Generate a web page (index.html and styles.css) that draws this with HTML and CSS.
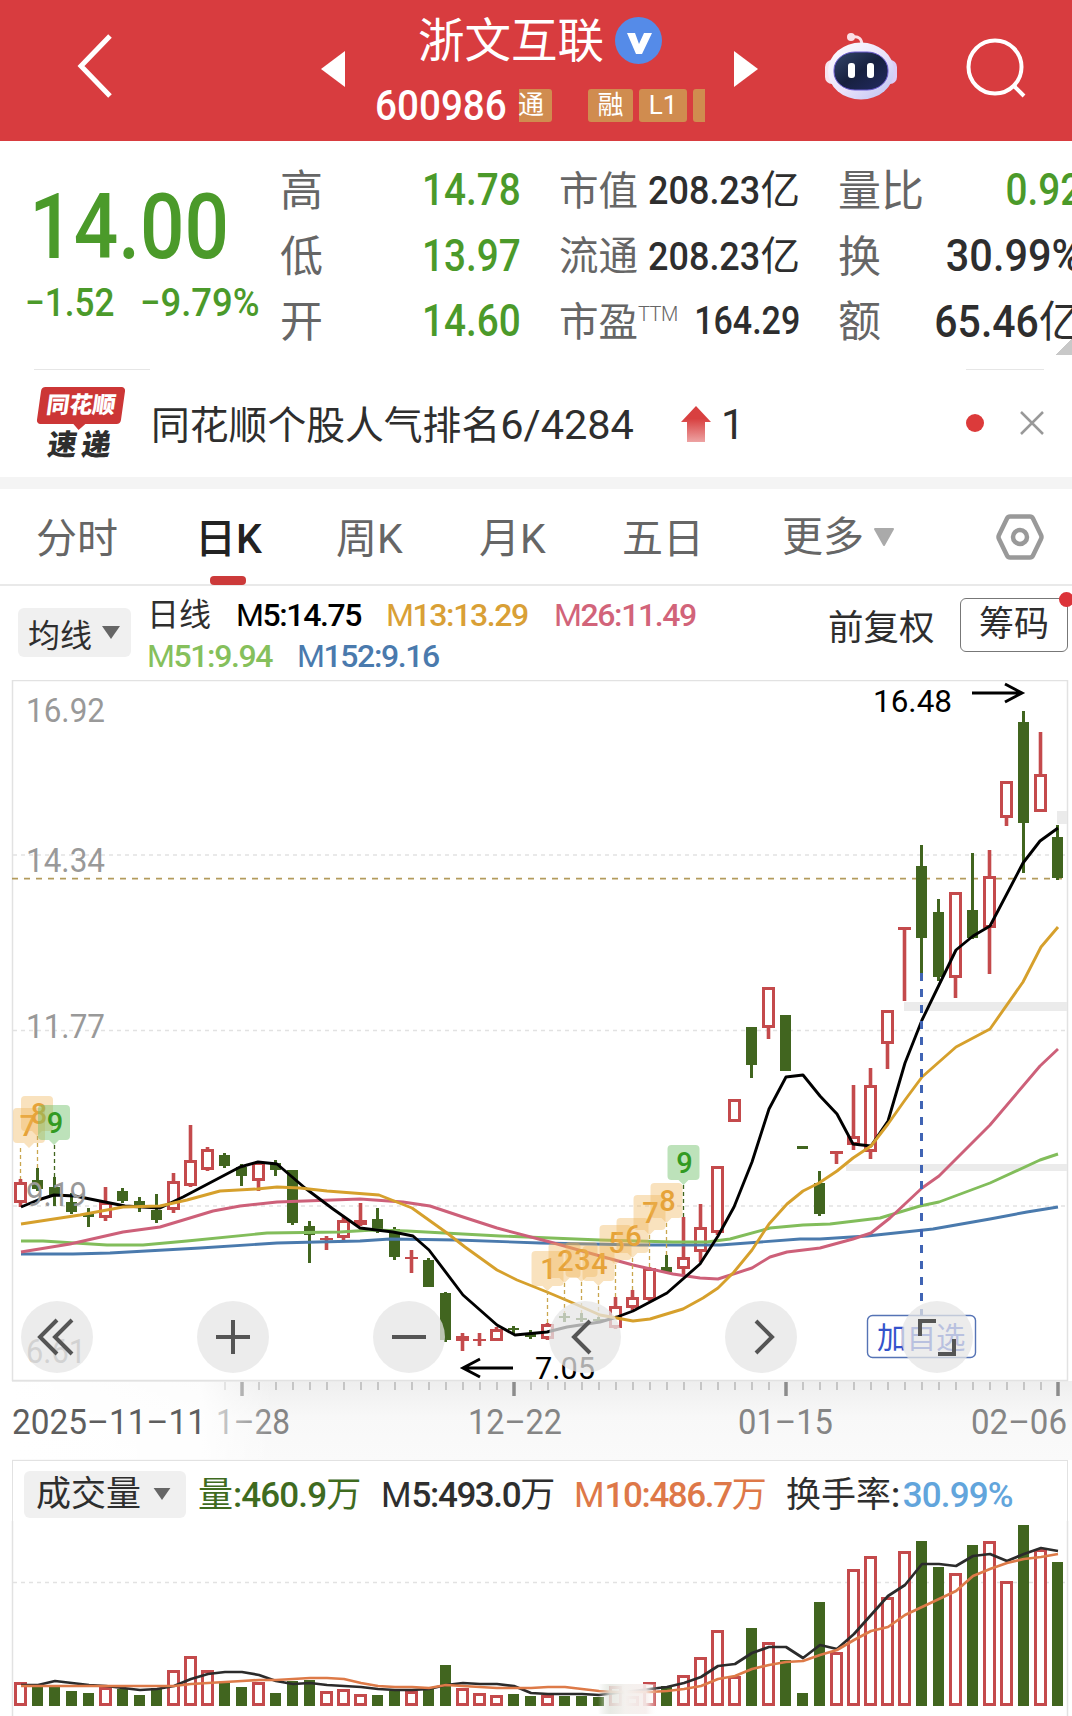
FILE: index.html
```html
<!DOCTYPE html>
<html lang="zh-CN">
<head>
    <meta charset="UTF-8">
    <meta name="viewport" content="width=device-width, initial-scale=1.0">
    <title>浙文互联 600986</title>
    <link rel="stylesheet" href="styles.css">
</head>
<body>
    <header class="header">
        <svg class="back" width="36" height="66" viewBox="0 0 36 66"><path d="M33 3 L4 33 L33 63"/></svg>
        <svg class="prev" width="24" height="36" viewBox="0 0 24 36"><path d="M24 0 V36 L0 18 Z"/></svg>
        <div class="stock">
            <div class="stock-name">浙文互联
                <svg width="47" height="47" viewBox="0 0 47 47"><circle cx="23.5" cy="23.5" r="23.5" fill="#558be8"/><path d="M12 16 h8 l4 11 5 -11 h8 l-10 21 h-6 z" fill="#fff"/></svg>
            </div>
            <div class="stock-code">
                <span class="code">600986</span>
                <span class="tag tag-first">通</span>
                <span class="tag tag-rong">融</span>
                <span class="tag">L1</span>
                <span class="tag tag-cut"></span>
            </div>
        </div>
        <svg class="next" width="24" height="36" viewBox="0 0 24 36"><path d="M0 0 V36 L24 18 Z"/></svg>
        <svg class="robot" width="72" height="68" viewBox="0 0 72 68">
            <defs>
                <linearGradient id="head" x1="0" y1="0" x2="1" y2="1"><stop offset="0" stop-color="#fff"/><stop offset=".55" stop-color="#e9e2fa"/><stop offset="1" stop-color="#b9c0f2"/></linearGradient>
                <linearGradient id="face" x1="0" y1="0" x2="1" y2="1"><stop offset="0" stop-color="#34466b"/><stop offset=".5" stop-color="#17203f"/><stop offset="1" stop-color="#222a62"/></linearGradient>
            </defs>
            <path d="M27 4 Q37 2 37 13" fill="none" stroke="#fbdfe6" stroke-width="3"/>
            <circle cx="26" cy="4" r="4" fill="#fbdfe6"/>
            <rect x="0" y="27" width="14" height="24" rx="7" fill="#f7e4ee"/>
            <rect x="58" y="27" width="14" height="24" rx="7" fill="#dccdf5"/>
            <ellipse cx="36" cy="38" rx="33" ry="28.500" fill="url(#head)"/>
            <rect x="9" y="19" width="54" height="38" rx="21" ry="18" fill="url(#face)" stroke="#6c5cd0" stroke-width="1"/>
            <rect x="23" y="30" width="7" height="15" rx="3" fill="#fff"/>
            <rect x="42" y="30" width="7" height="15" rx="3" fill="#fff"/>
        </svg>
        <svg class="search" width="62" height="62" viewBox="0 0 62 62"><circle cx="29" cy="29" r="26.5"/><path d="M48 48 L58 58"/></svg>
    </header>

    <section class="quote">
        <div class="price-box">
            <div class="price num">14.00</div>
            <div class="change"><span class="num">−1.52</span><span class="num rate">−9.79%</span></div>
        </div>
        <dl class="col col-a">
            <dt>高</dt><dd class="green"><span class="num">14.78</span></dd>
            <dt>低</dt><dd class="green"><span class="num">13.97</span></dd>
            <dt>开</dt><dd class="green"><span class="num">14.60</span></dd>
        </dl>
        <dl class="col col-b">
            <dt>市值</dt><dd class="unit"><span class="num">208.23</span>亿</dd>
            <dt>流通</dt><dd class="unit"><span class="num">208.23</span>亿</dd>
            <dt>市盈<sup>TTM</sup></dt><dd><span class="num pe">164.29</span></dd>
        </dl>
        <dl class="col col-c">
            <dt>量比</dt><dd class="green"><span class="num">0.92</span></dd>
            <dt>换</dt><dd><span class="num rate">30.99%</span></dd>
            <dt>额</dt><dd class="unit"><span class="num amount">65.46</span>亿</dd>
        </dl>
        <span class="corner"></span>
    </section>

    <section class="notice">
        <div class="notice-lines"><i></i><i></i></div>
        <div class="notice-row">
            <div class="logo">
                <div class="logo-top"><span>同花顺</span></div>
                <div class="logo-bottom">速递</div>
            </div>
            <p class="notice-text">同花顺个股人气排名<span>6/4284</span></p>
            <svg class="up" width="30" height="36" viewBox="0 0 30 36">
                <defs><linearGradient id="up" x1="0" y1="0" x2="0" y2="1"><stop offset=".35" stop-color="#d84040"/><stop offset="1" stop-color="#eda3a3"/></linearGradient></defs>
                <path d="M15 0 L30 16 H24 V36 H6 V16 H0 Z" fill="url(#up)"/>
            </svg>
            <span class="rank">1</span>
            <span class="dot"></span>
            <svg class="close" width="24" height="24" viewBox="0 0 24 24"><path d="M1 1 L23 23 M23 1 L1 23"/></svg>
        </div>
    </section>

    <nav class="tabs">
        <span class="tab">分时</span>
        <span class="tab active">日K</span>
        <span class="tab">周K</span>
        <span class="tab">月K</span>
        <span class="tab">五日</span>
        <span class="tab tab-more">更多<svg width="22" height="19" viewBox="0 0 22 19"><path d="M2 1 H20 L11 17 Z" fill="#aaa" stroke="#aaa" stroke-width="2" stroke-linejoin="round"/></svg></span>
        <svg class="hexagon" width="48" height="48" viewBox="0 0 48 48"><path d="M14 3.5 H34 Q36 3.5 37 5.500 L45 22 Q46 24 45 26 L37 42.500 Q36 44.500 34 44.500 H14 Q12 44.500 11 42.500 L3 26 Q2 24 3 22 L11 5.500 Q12 3.500 14 3.500 Z"/><circle cx="24" cy="24" r="7"/></svg>
    </nav>

    <section class="legend">
        <button class="select">均线<svg width="18" height="14" viewBox="0 0 18 14"><path d="M0 0 H18 L9 13 Z" fill="#666"/></svg></button>
        <div class="averages">
            <div class="avg-row">
                <span class="avg-title">日线</span>
                <span class="avg m5"><i>M</i>5:14.75</span>
                <span class="avg m13"><i>M</i>13:13.29</span>
                <span class="avg m26"><i>M</i>26:11.49</span>
            </div>
            <div class="avg-row">
                <span class="avg m51"><i>M</i>51:9.94</span>
                <span class="avg m152"><i>M</i>152:9.16</span>
            </div>
        </div>
        <span class="fq">前复权</span>
        <button class="chips">筹码<b></b></button>
    </section>

    <section class="kline">
        <svg id="kline" width="1072" height="780" viewBox="0 680 1072 780"></svg>
        <div class="controls">
            <button><svg viewBox="0 0 72 72"><path d="M36 19 L19 36 L36 53 M51 19 L34 36 L51 53"/></svg></button>
            <button><svg viewBox="0 0 72 72"><path d="M19 36 H53 M36 19 V53"/></svg></button>
            <button><svg viewBox="0 0 72 72"><path d="M19 36 H53"/></svg></button>
            <button><svg viewBox="0 0 72 72"><path d="M41 20 L25 36 L41 52"/></svg></button>
            <button><svg viewBox="0 0 72 72"><path d="M31 20 L47 36 L31 52"/></svg></button>
            <button><svg viewBox="0 0 72 72"><path d="M19 35 V20 H35 M37 53 H53 V38"/></svg></button>
        </div>
    </section>

    <section class="volume">
        <div class="volume-head">
            <button class="select">成交量<svg width="18" height="13" viewBox="0 0 18 14"><path d="M0 0 H18 L9 13 Z" fill="#666"/></svg></button>
            <span class="vol v1">量<span>:460.9</span>万</span>
            <span class="vol v2"><i>M</i><span>5:493.0</span>万</span>
            <span class="vol v3"><i>M</i><span>10:486.7</span>万</span>
            <span class="vol v4">换手率<span>:</span></span>
            <span class="vol v5"><span>30.99%</span></span>
        </div>
        <svg id="volume" width="1072" height="195" viewBox="0 1521 1072 195"></svg>
    </section>

    <script>
        const RED = '#c44a4c';
        const GREEN = '#41651f';
        const X0 = 20.5;
        const STEP = 17;

        // [typ, high, top, bottom, low, volume]
        const candles = [
            ['r',1179,1182,1203,1207,1682], ['g',1168,1180,1189,1191,1687], ['g',1177,1187,1195,1206,1687],
            ['g',1193,1202,1212,1214,1691], ['g',1208,1214,1217,1227,1693], ['r',1187,1202,1218,1221,1687],
            ['g',1188,1191,1201,1203,1689], ['g',1197,1201,1208,1212,1695], ['g',1194,1210,1220,1223,1688],
            ['r',1173,1181,1210,1213,1670], ['r',1125,1160,1186,1187,1656], ['r',1147,1149,1170,1171,1670],
            ['g',1153,1155,1166,1168,1683], ['g',1164,1167,1176,1186,1687], ['r',1161,1162,1181,1191,1682],
            ['g',1160,1163,1170,1176,1693], ['g',1170,1170,1223,1225,1681], ['g',1221,1226,1235,1263,1680],
            ['r',1236,1238,1240,1250,1691], ['r',1217,1220,1238,1240,1689], ['r',1203,1220,1225,1226,1694],
            ['g',1208,1219,1229,1233,1695], ['g',1227,1229,1257,1260,1691], ['r',1250,1257,1259,1273,1691],
            ['g',1258,1260,1287,1287,1689], ['g',1292,1293,1340,1342,1665], ['r',1333,1336,1341,1351,1688],
            ['r',1333,1339,1341,1346,1693], ['r',1327,1329,1341,1341,1695], ['g',1326,1328,1330,1335,1694],
            ['g',1330,1333,1337,1339,1696], ['r',1323,1324,1339,1340,1695], ['g',1313,1316,1318,1322,1696],
            ['g',1313,1318,1320,1322,1696], ['g',1317,1319,1321,1323,1697], ['r',1297,1306,1328,1329,1686],
            ['r',1290,1297,1308,1310,1696], ['r',1267,1268,1300,1301,1682], ['g',1255,1267,1272,1273,1686],
            ['r',1217,1257,1269,1276,1675], ['r',1204,1227,1252,1262,1657], ['r',1166,1166,1233,1235,1630],
            ['r',1099,1099,1122,1122,1676], ['g',1027,1027,1065,1078,1628], ['r',987,987,1028,1039,1642],
            ['g',1015,1015,1071,1071,1660], ['g',1146,1146,1149,1149,1693], ['g',1171,1183,1214,1216,1602],
            ['r',1151,1151,1154,1164,1652], ['r',1085,1136,1145,1150,1569], ['r',1068,1085,1152,1159,1556],
            ['r',1010,1010,1044,1069,1597], ['r',927,927,930,1001,1551], ['g',845,866,938,974,1541],
            ['g',899,912,977,981,1567], ['r',892,892,978,998,1573], ['g',853,910,938,939,1545],
            ['r',850,876,928,974,1541], ['r',781,781,818,826,1581], ['g',711,722,823,873,1525],
            ['r',732,774,812,812,1549], ['g',825,837,878,880,1562]
        ];

        const averages = [
            ['#4a7aad', '21,1254 73,1254 110,1253 200,1248 277,1243 317,1242 360,1241 390,1239 457,1240 540,1243 640,1245 720,1245 800,1239 820,1239 867,1236 933,1229 990,1219 1027,1212 1058,1207'],
            ['#82bd5b', '21,1241 43,1241 107,1245 143,1245 187,1241 267,1233 340,1232 373,1230 407,1231 500,1236 600,1240 673,1242 707,1242 730,1239 770,1228 803,1225 830,1224 880,1218 920,1206 939,1202 990,1183 1040,1160 1058,1154'],
            ['#cd6079', '21,1252 70,1244 123,1232 160,1227 180,1221 213,1211 240,1206 277,1202 360,1199 403,1202 430,1206 463,1217 497,1228 550,1242 600,1256 633,1265 673,1274 700,1278 718,1279 752,1268 770,1257 787,1252 820,1248 853,1239 871,1233 890,1218 922,1188 939,1176 990,1125 1040,1066 1058,1049'],
            ['#000', '21,1207 38,1200 54,1195 75,1196 110,1203 125,1206 160,1208 183,1197 240,1167 258,1162 277,1164 305,1188 333,1209 360,1228 393,1232 413,1236 429,1250 463,1295 497,1325 515,1335 547,1332 567,1327 600,1322 617,1317 633,1311 667,1293 700,1264 718,1236 734,1207 752,1162 769,1109 786,1077 803,1075 820,1096 837,1114 853,1144 871,1146 888,1121 905,1063 922,1020 939,985 956,950 973,936 990,926 1023,863 1040,841 1058,828'],
            ['#d6a02c', '21,1224 80,1215 123,1207 160,1206 187,1200 220,1191 257,1189 277,1187 300,1188 327,1191 379,1195 412,1208 447,1233 465,1247 497,1270 517,1280 547,1292 573,1303 600,1315 633,1321 650,1319 683,1309 703,1298 718,1288 734,1272 752,1250 769,1224 787,1204 803,1191 819,1183 837,1171 853,1158 871,1146 888,1124 905,1100 922,1077 956,1047 990,1029 1023,982 1041,947 1058,927']
        ];

        // [ziffer, index, y oben, box x, text x]
        const marks = [
            ['7',0,1108,29,28], ['8',1,1096,37,39], ['9',2,1105,54,55],
            ['1',31,1251], ['2',32,1243], ['3',33,1242], ['4',34,1246], ['5',35,1225],
            ['6',36,1218], ['7',37,1195], ['8',38,1183], ['9',39,1145]
        ];

        const volM5 = [1685,1685,1681,1683,1685,1686,1688,1690,1689,1686,1679,1674,1672,1672,1675,1681,1684,1683,1685,1686,1687,1689,1690,1690,1689,1685,1683,1684,1684,1686,1693,1694,1694,1694,1695,1693,1691,1689,1687,1683,1677,1666,1664,1653,1647,1647,1658,1645,1649,1634,1615,1596,1585,1564,1564,1566,1556,1554,1561,1554,1548,1551];
        const volM10 = [1686,1686,1686,1686,1686,1686,1686,1686,1686,1686,1684,1683,1682,1681,1680,1680,1679,1678,1678,1679,1683,1686,1687,1687,1688,1685,1686,1687,1688,1688,1688,1687,1687,1689,1691,1692,1692,1692,1691,1689,1686,1679,1676,1669,1665,1662,1661,1655,1650,1640,1631,1627,1615,1607,1599,1591,1576,1569,1563,1559,1557,1554];

        const xAt = i => X0 + i * STEP;
        const line = (x1, y1, x2, y2, c, w, extra = '') =>
            `<line x1="${x1}" y1="${y1}" x2="${x2}" y2="${y2}" stroke="${c}" stroke-width="${w}" ${extra}/>`;
        const text = (x, y, s, cls, len, extra = '') =>
            `<text x="${x}" y="${y}" class="${cls}" textLength="${len}" lengthAdjust="spacingAndGlyphs" ${extra}>${s}</text>`;

        function body(x, top, bottom, type) {
            if (type === 'g') return `<rect x="${x - 5.5}" y="${top}" width="11" height="${bottom - top}" fill="${GREEN}"/>`;
            if (bottom - top < 7) return `<rect x="${x - 6.5}" y="${top}" width="13" height="${bottom - top}" fill="${RED}"/>`;
            return `<rect x="${x - 5}" y="${top + 1.5}" width="10" height="${bottom - top - 3}" fill="#fff" stroke="${RED}" stroke-width="3"/>`;
        }

        function drawKline() {
            let s = `<defs>
                <linearGradient id="fadeY" x1="0" y1="0" x2="0" y2="1"><stop offset="0" stop-color="#eeeeee"/><stop offset=".45" stop-color="#f8f8f8"/><stop offset="1" stop-color="#fafafa"/></linearGradient>
                <linearGradient id="fadeX"><stop offset="0" stop-color="#fff"/><stop offset=".72" stop-color="#fff" stop-opacity=".85"/><stop offset=".82" stop-color="#fff" stop-opacity=".5"/><stop offset="1" stop-color="#fff" stop-opacity="0"/></linearGradient>
            </defs>
            <rect x="12" y="1381" width="1060" height="79" fill="url(#fadeY)"/>
            <rect x="12.500" y="680.500" width="1055" height="700" fill="#fff" stroke="#e2e2e2" stroke-width="1.500"/>`;

            // Raster
            [855, 1030.5, 1206].forEach(y => s += line(13, y, 1067, y, '#e2e2e2', 1.3, 'stroke-dasharray="4 4"'));
            s += '<g fill="#ebebeb"><rect x="1057" y="811" width="10" height="13"/><rect x="904" y="1002" width="163" height="9"/><rect x="846" y="1164" width="221" height="7"/></g>';
            s += line(12, 878.7, 1067, 878.7, '#b39b5c', 1.8, 'stroke-dasharray="6 6"');

            candles.forEach(([type, high, top, bottom, low], i) => {
                const c = type === 'g' ? GREEN : RED;
                s += line(xAt(i), high, xAt(i), low, c, type === 'g' ? 3 : 3.6) + body(xAt(i), top, bottom, type);
            });
            averages.forEach(([c, pts]) => s += `<polyline points="${pts}" fill="none" stroke="${c}" stroke-width="2.900" stroke-linejoin="round"/>`);
            s += line(921.5, 973, 921.5, 1315, '#4064b4', 3, 'stroke-dasharray="8 8"');

            [['16.92',722,79], ['14.34',872,79], ['11.77',1038,79], ['9.19',1206,61], ['6.61',1363,60]]
                .forEach(([t, y, w]) => s += text(26, y, t, 'axis', w));

            marks.forEach(([n, i, y, bx, tx]) => {
                const x = bx || xAt(i);
                const nine = n === '9';
                s += line(xAt(i), y + 40, xAt(i), candles[i][1], nine ? '#41651f' : '#c9a64e', 1.3, 'stroke-dasharray="4 3"');
                s += `<path d="M${x - 12} ${y} h24 q4 0 4 4 v27 q0 4 -4 4 h-7 l-5 5 -5 -5 h-7 q-4 0 -4 -4 v-27 q0 -4 4 -4 z" fill="${nine ? '#6fbf68' : '#f0b455'}" fill-opacity="${nine ? 0.46 : 0.38}"/>`;
                s += `<text x="${tx || x + 1}" y="${y + 28}" class="mark" fill="${nine ? '#329a22' : '#e6a339'}">${n}</text>`;
            });

            s += text(873, 712, '16.48', 'peak', 79) + text(535, 1379, '7.05', 'peak', 60);
            s += '<g fill="none" stroke="#000" stroke-width="3"><path d="M972 693 H1022 M1005 684 L1022 693 L1005 702"/><path d="M513 1368 H463 M480 1359 L463 1368 L480 1377"/></g>';
            s += '<rect x="867.500" y="1315.500" width="108" height="42" rx="5" fill="#fff" stroke="#5573b5" stroke-width="1.400"/>';
            s += '<text x="877" y="1348" class="watch">加自选</text>';

            // Zeitachse
            for (let i = 12; i < 62; i++) {
                const major = [13, 29, 45, 61].includes(i);
                s += line(xAt(i) + 0.5, 1382, xAt(i) + 0.5, major ? 1396 : 1390, major ? '#8c8c8c' : '#bbb', major ? 3.5 : 1.6);
            }
            s += text(216, 1434, '1–28', 'date', 74) + text(468, 1434, '12–22', 'date', 94);
            s += text(738, 1434, '01–15', 'date', 95) + text(971, 1434, '02–06', 'date', 96);
            s += '<rect x="12" y="1382" width="261" height="77" fill="url(#fadeX)"/>';
            s += text(12, 1434, '2025–11–11', 'date first', 194);
            document.getElementById('kline').innerHTML = s;
        }

        function drawVolume() {
            let s = '<path d="M12.500 1521 V1716 M1067.500 1521 V1716" stroke="#e2e2e2" stroke-width="1.500"/>';
            s += line(13, 1582.5, 1067, 1582.5, '#e2e2e2', 1.3, 'stroke-dasharray="4 4"');
            candles.forEach((c, i) => s += body(xAt(i), c[5], 1706, c[0]));
            [[volM5, '#2b2b2b'], [volM10, '#dd7a48']].forEach(([data, c]) => {
                const pts = data.map((y, i) => `${xAt(i) + 0.5},${y}`).join(' ');
                s += `<polyline points="${pts}" fill="none" stroke="${c}" stroke-width="2.700" stroke-linejoin="round"/>`;
            });
            // Verlauf unter dem unteren Griff
            s += '<defs><linearGradient id="smear"><stop offset="0" stop-color="#d9ddd3" stop-opacity="0"/><stop offset=".2" stop-color="#e3e6df" stop-opacity=".85"/><stop offset=".45" stop-color="#f4f1ee"/><stop offset=".8" stop-color="#f6eeec" stop-opacity=".9"/><stop offset="1" stop-color="#fff" stop-opacity="0"/></linearGradient></defs>';
            s += '<rect x="598" y="1684" width="60" height="30" fill="url(#smear)"/>';
            document.getElementById('volume').innerHTML = s;
        }

        drawKline();
        drawVolume();
    </script>
</body>
</html>
```
FILE: styles.css
```css
* {
    box-sizing: border-box;
}

body {
    margin: 0;
    width: 1072px;
    height: 1716px;
    overflow: hidden;
    background-color: #fff;
    color: #2e2e2e;
    font-family: Roboto, "Noto Sans CJK SC", sans-serif;
    font-weight: 400;
}

button {
    font: inherit;
    color: inherit;
    border: none;
    padding: 0;
}

i {
    font-style: normal;
}

.num {
    display: inline-block;
    font-weight: 500;
    transform: scaleX(0.91);
    transform-origin: right center;
}

.green {
    color: #4b9a2a;
}

/* Kopfzeile */
.header {
    display: flex;
    height: 141px;
    background-color: #d83c3f;
    color: #fff;
}

.header > svg {
    flex: none;
}

.back {
    margin: 33px 0 0 77px;
    fill: none;
    stroke: #fff;
    stroke-width: 5;
}

.prev {
    margin: 51px 0 0 208px;
    fill: #fff;
}

.next {
    margin: 51px 0 0 29px;
    fill: #fff;
}

.stock {
    width: 330px;
    margin-left: 30px;
    overflow: hidden;
}

.stock-name {
    display: flex;
    align-items: center;
    gap: 11px;
    height: 81px;
    padding-left: 43px;
    font-size: 46.5px;
    font-weight: 400;
    line-height: 88px;
}

.stock-name svg {
    flex: none;
}

.stock-code {
    display: flex;
    align-items: center;
    height: 49px;
    overflow: hidden;
}

.code {
    width: 144px;
    font-size: 42px;
    font-weight: 500;
    transform: scaleX(0.92);
    transform-origin: left center;
}

.tag {
    flex: none;
    width: 48px;
    height: 33px;
    margin-right: 6px;
    border-radius: 3px;
    background-color: #d08c4f;
    font-size: 26px;
    line-height: 33px;
    text-align: center;
}

.tag-first {
    width: 33px;
    margin-right: 36px;
    border-radius: 0 3px 3px 0;
    text-align: left;
    text-indent: -1px;
}

.tag-rong {
    width: 45px;
}

.tag-cut {
    width: 12px;
    margin-right: 0;
    border-radius: 3px 0 0 3px;
}

.robot {
    margin: 33px 0 0 67px;
}

.search {
    margin: 38px 0 0 69px;
    fill: none;
    stroke: #fff;
    stroke-width: 4;
}

/* Kursdaten */
.quote {
    position: relative;
    display: flex;
    height: 228px;
    overflow: hidden;
}

.price-box {
    flex: none;
    width: 280px;
    padding: 33px 0 0 25px;
    color: #4b9a2a;
}

.price-box .num {
    transform-origin: left center;
}

.price-box .price {
    padding-left: 5px;
    font-size: 91px;
    line-height: 107px;
    transform: scaleX(0.86);
}

.change {
    display: flex;
    font-size: 39px;
    line-height: 44px;
}

.change .num {
    flex: none;
    width: 115px;
    transform: scaleX(0.9);
}

.change .rate {
    transform: scaleX(0.935);
}

.col {
    display: grid;
    grid-template-columns: auto 1fr;
    grid-template-rows: repeat(3, 65.5px);
    align-items: center;
    flex: none;
    margin: 16px 0 0;
}

.col dt {
    padding-bottom: 5px;
    color: #666;
    white-space: nowrap;
}

.col dd {
    margin: 0;
    text-align: right;
    white-space: nowrap;
}

.col dd.unit {
    padding-bottom: 6px;
}

.col-a {
    width: 241px;
    font-size: 43px;
}

.col-a .num,
.col-c .num {
    font-size: 45px;
    transform: scaleX(0.86);
}

.col-c .rate {
    transform: scaleX(0.92);
}

.col-c .amount {
    transform: scaleX(0.91);
}

.col-b {
    grid-template-columns: 78px 163px;
    width: 241px;
    margin-left: 38px;
    font-size: 39.5px;
}

.col-b .pe {
    transform: scaleX(0.86);
}

.col-c {
    width: 240px;
    margin-left: 38px;
    font-size: 43px;
}

.col sup {
    font-size: 20px;
    font-weight: 300;
    letter-spacing: -0.5px;
    line-height: 0;
    vertical-align: 15px;
}

.corner {
    position: absolute;
    top: 197px;
    right: 0;
    width: 17px;
    height: 17px;
    background: linear-gradient(135deg, transparent 50%, #c8c8c8 50%);
}

/* Hinweiszeile */
.notice {
    height: 120px;
    border-bottom: 12px solid #f4f4f4;
}

.notice-lines {
    display: flex;
    justify-content: space-between;
    padding: 0 28px 0 34px;
}

.notice-lines i {
    width: 116px;
    height: 1px;
    background-color: #e6e6e6;
}

.notice-lines i + i {
    width: 78px;
}

.notice-row {
    display: flex;
    align-items: center;
    height: 107px;
}

.logo {
    width: 84px;
    height: 74px;
    margin-left: 39px;
    font-weight: 900;
    text-align: center;
}

.logo-top {
    position: relative;
    height: 37px;
    border-radius: 4px;
    background-color: #cc3636;
    color: #fff;
    font-size: 23px;
    line-height: 38px;
    transform: skewX(-8deg);
}

.logo-top::after {
    content: "";
    position: absolute;
    left: 36px;
    top: 36px;
    border: 7px solid transparent;
    border-top-color: #cc3636;
    border-bottom: none;
}

.logo-bottom {
    padding-left: 2px;
    font-size: 29px;
    line-height: 42px;
    letter-spacing: 5px;
    transform: skewX(-8deg);
}

.notice-text {
    width: 528px;
    margin: 0 0 4px 28px;
    font-size: 38.8px;
    white-space: nowrap;
}

.notice-text span {
    font-size: 41.5px;
}

.up {
    margin-left: 2px;
}

.rank {
    width: 243px;
    margin: 2px 0 0 10px;
    font-size: 42px;
}

.dot {
    width: 18px;
    height: 18px;
    margin: 0 0 2px 2px;
    border-radius: 50%;
    background-color: #dc3a3a;
}

.close {
    margin-left: 36px;
    margin-bottom: 2px;
    fill: none;
    stroke: #999;
    stroke-width: 2.5;
}

/* Reiter */
.tabs {
    display: flex;
    height: 97px;
    border-bottom: 2px solid #e9e9e9;
    color: #666;
    font-size: 41px;
    line-height: 101px;
}

.tab {
    position: relative;
    width: 143px;
}

.tab:first-child {
    flex: none;
    width: 158px;
    margin-right: 37px;
    padding-left: 36px;
    white-space: nowrap;
}

.tab:nth-child(2) {
    width: 141px;
}

.tab:nth-child(5) {
    width: 160px;
}

.tab.active {
    color: #222;
    font-weight: 500;
}

.tab.active::after {
    content: "";
    position: absolute;
    left: 15px;
    top: 87px;
    width: 36px;
    height: 9px;
    border-radius: 4px;
    background-color: #cc3a3a;
}

.tab-more {
    display: flex;
    align-items: center;
    gap: 9px;
    width: 214px;
    height: 97px;
}

.hexagon {
    flex: none;
    margin-top: 24px;
    fill: none;
    stroke: #999;
    stroke-width: 4.5;
}

/* Legende */
.legend {
    display: flex;
    height: 94px;
    padding-left: 18px;
}

.select {
    display: flex;
    align-items: center;
    flex: none;
    background-color: #f0f0f0;
    border-radius: 6px;
    color: #2e2e2e;
}

.legend .select {
    width: 113px;
    height: 49px;
    margin-top: 22px;
    padding-left: 10px;
    gap: 10px;
    font-size: 32px;
}

.averages {
    flex: none;
    width: 697px;
    padding: 7px 0 0 16px;
}

.avg-row {
    display: flex;
    height: 41px;
    font-size: 32px;
    line-height: 45px;
    white-space: nowrap;
}

.avg-title {
    width: 89px;
}

.avg {
    flex: none;
    font-weight: 500;
    letter-spacing: -1.4px;
}

.avg i,
.vol i {
    font-weight: 400;
}

.m5 {
    width: 150px;
    color: #000;
}

.m13 {
    width: 168px;
    color: #d9a036;
}

.m26 {
    color: #d2647a;
}

.m51 {
    width: 150px;
    color: #86c05c;
}

.m152 {
    color: #4a7aad;
}

.fq {
    flex: none;
    width: 132px;
    font-size: 35.5px;
    line-height: 84px;
}

.chips {
    position: relative;
    flex: none;
    width: 108px;
    height: 54px;
    margin-top: 12px;
    border: 1.5px solid #777;
    border-radius: 6px;
    background-color: #fff;
    font-size: 35px;
    line-height: 52px;
}

.chips b {
    position: absolute;
    top: -7px;
    right: -7px;
    width: 15px;
    height: 15px;
    border-radius: 50%;
    background-color: #dc3339;
}

/* Diagramm */
.kline {
    position: relative;
    height: 780px;
}

.kline > svg,
.volume > svg {
    display: block;
}

.controls {
    position: absolute;
    left: 21px;
    top: 621px;
    display: flex;
    gap: 104px;
}

.controls button {
    width: 72px;
    height: 72px;
    border-radius: 50%;
    background-color: rgba(230, 230, 230, 0.75);
}

.controls svg {
    display: block;
    fill: none;
    stroke: #555;
    stroke-width: 4;
}

.axis {
    font-size: 34px;
    fill: #999;
}

.date {
    font-size: 35px;
    fill: #858585;
}

.date.first {
    fill: #5e5e5e;
}

.peak {
    font-size: 31px;
    fill: #000;
}

.mark {
    font-size: 29px;
    font-weight: 500;
    text-anchor: middle;
}

.watch {
    font-size: 29.5px;
    fill: #3453cc;
}

/* Volumen */
.volume-head {
    display: flex;
    align-items: center;
    width: 1056px;
    height: 61px;
    margin-left: 12px;
    padding: 9px 0 0 11px;
    border: 1.5px solid #e2e2e2;
    border-bottom: none;
    font-size: 35px;
    line-height: 52px;
    white-space: nowrap;
}

.volume-head .select {
    width: 162px;
    height: 47px;
    margin-bottom: 2px;
    padding-left: 12px;
    gap: 12px;
}

.vol {
    flex: none;
    margin-bottom: 0;
}

.vol span {
    font-weight: 500;
    letter-spacing: -1.4px;
}

.v1 {
    width: 183px;
    margin-left: 12px;
    color: #3f6b1f;
}

.v1 span {
    letter-spacing: -0.9px;
}

.v2 {
    width: 193px;
}

.v3 {
    width: 212px;
    color: #de7848;
}

.v5 {
    margin: 0 0 0 4px;
    color: #62a5dc;
}

.v5 span {
    letter-spacing: -0.9px;
}
```
